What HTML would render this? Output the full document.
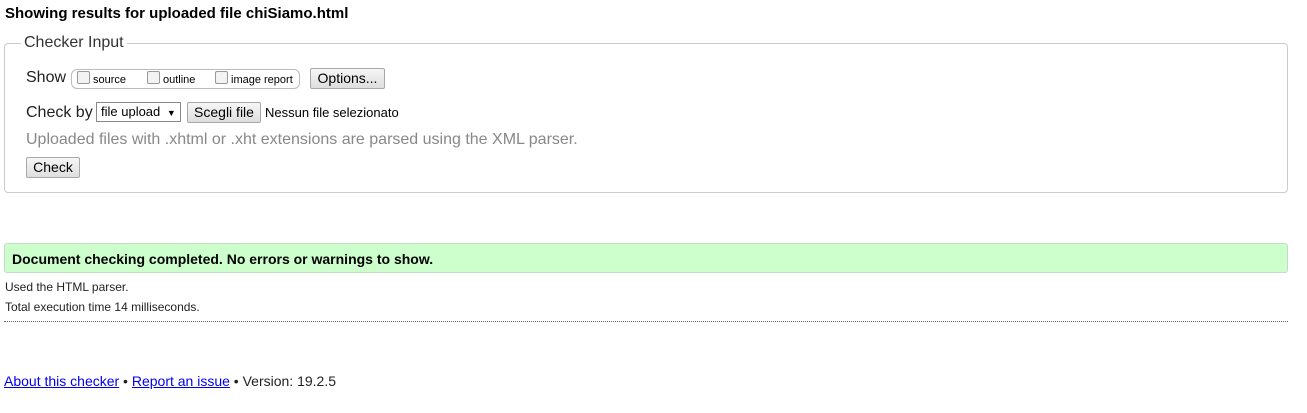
<!DOCTYPE html>
<html><head><meta charset="utf-8"><style>
body{margin:0;background:#fff;font-family:"Liberation Sans",Arial,sans-serif;color:#000;width:1307px;height:413px;position:relative;overflow:hidden}
.a{position:absolute;white-space:nowrap}
.btn{position:absolute;background:linear-gradient(#f6f6f6,#dedede);border:1px solid #a9a9a9;border-radius:2px;font-size:13px;box-sizing:border-box;text-align:center;line-height:18px}
.cb{display:inline-block;width:11px;height:11px;border:1px solid #999;border-radius:2px;background:#f3f3f3;vertical-align:-1px;margin-right:3px}
a{color:#00e;text-decoration:underline}
</style></head><body>
<div class="a" style="left:5px;top:5px;font-size:15px;font-weight:bold">Showing results for uploaded file chiSiamo.html</div>
<div class="a" style="left:4px;top:43px;width:1282px;height:148px;border:1px solid #ccc;border-radius:4px"></div>
<div class="a" style="left:21px;top:34px;background:#fff;padding:0 3px;font-size:16px;color:#333">Checker Input</div>
<div class="a" style="left:26px;top:69px;font-size:16px;color:#222">Show</div>
<div class="a" style="left:71px;top:69px;width:227px;height:18px;border:1px solid #bbb;border-radius:6px"></div>
<div class="a" style="left:77px;top:71px;font-size:11px"><span class="cb"></span>source</div>
<div class="a" style="left:147px;top:71px;font-size:11px"><span class="cb"></span>outline</div>
<div class="a" style="left:215px;top:71px;font-size:11px"><span class="cb"></span>image report</div>
<div class="btn" style="left:310px;top:68px;width:75px;height:21px;font-size:14px">Options...</div>
<div class="a" style="left:26px;top:104px;font-size:16px;color:#222">Check by</div>
<div class="a" style="left:96px;top:102px;width:85px;height:20px;border:1px solid #888;box-sizing:border-box;font-size:13px;line-height:18px;padding-left:4px">file upload <span style="font-size:9px;margin-left:3px">▼</span></div>
<div class="btn" style="left:187px;top:102px;width:74px;height:21px;font-size:14px">Scegli file</div>
<div class="a" style="left:265px;top:105px;font-size:13px">Nessun file selezionato</div>
<div class="a" style="left:26px;top:131px;font-size:16px;color:#888">Uploaded files with .xhtml or .xht extensions are parsed using the XML parser.</div>
<div class="btn" style="left:26px;top:157px;width:54px;height:21px;font-size:14px">Check</div>
<div class="a" style="left:4px;top:243px;width:1282px;height:28px;background:#ccffcc;border:1px solid #c4dcc4;border-radius:3px"></div>
<div class="a" style="left:12px;top:251px;font-size:14px;font-weight:bold">Document checking completed. No errors or warnings to show.</div>
<div class="a" style="left:5px;top:280px;font-size:12px;color:#222">Used the HTML parser.</div>
<div class="a" style="left:5px;top:300px;font-size:12px;color:#222">Total execution time 14 milliseconds.</div>
<div class="a" style="left:4px;top:321px;width:1284px;border-top:1px dotted #666"></div>
<div class="a" style="left:4px;top:373px;font-size:14px;color:#222"><a>About this checker</a> • <a>Report an issue</a> • Version: 19.2.5</div>
</body></html>
